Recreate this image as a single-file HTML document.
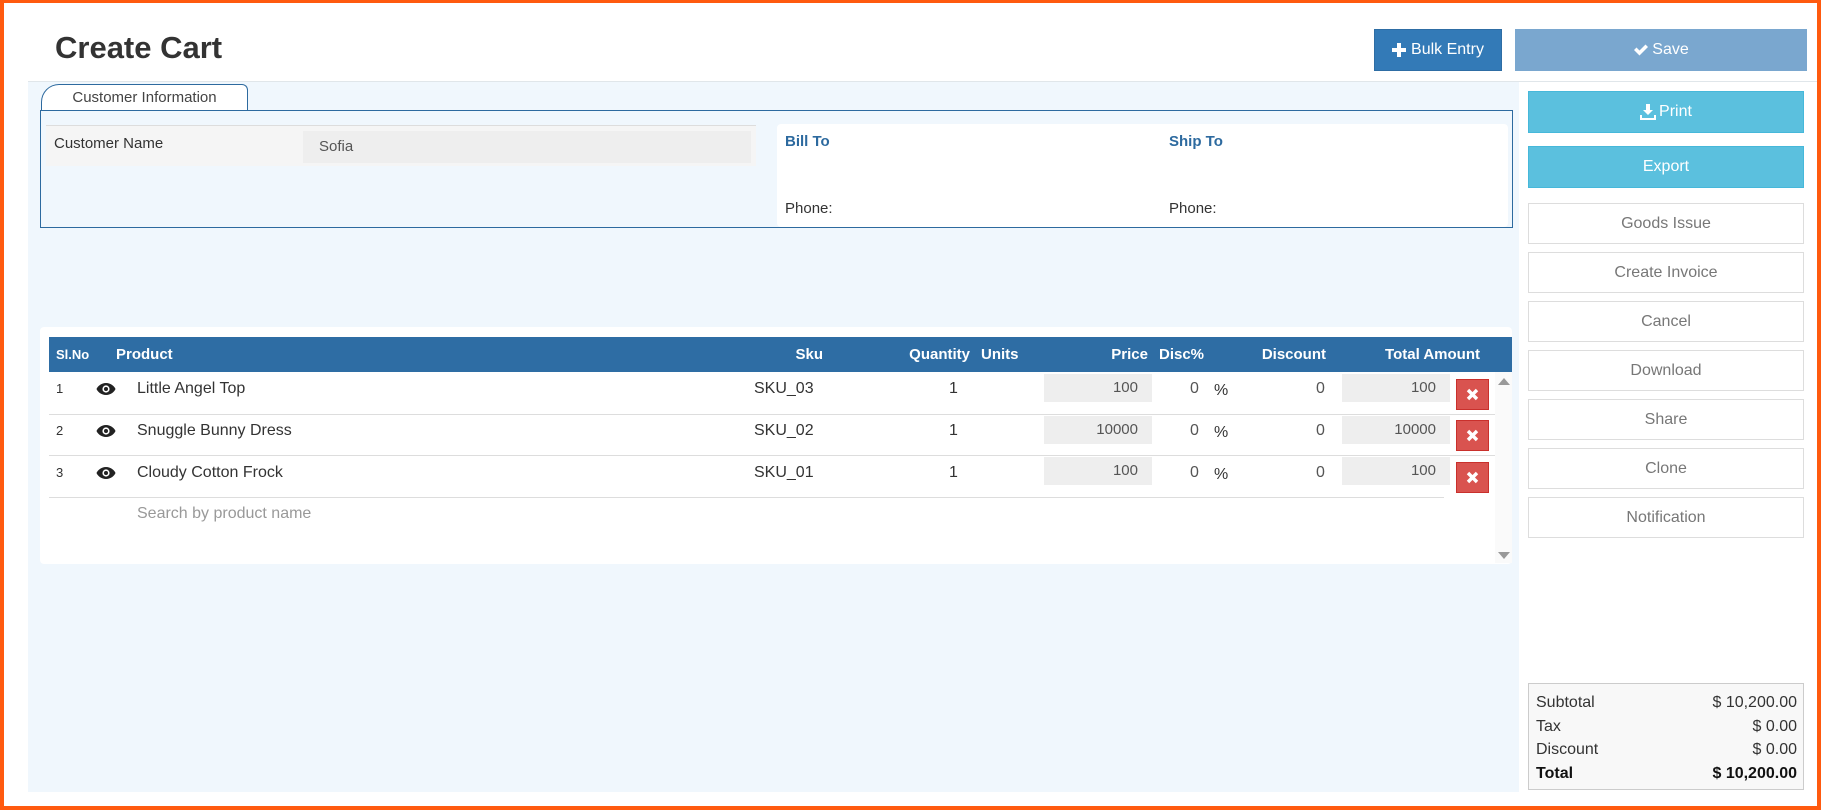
<!DOCTYPE html>
<html><head><meta charset="utf-8"><style>
*{box-sizing:border-box;margin:0;padding:0}
body{width:1821px;height:810px;position:relative;overflow:hidden;background:#fff;font-family:"Liberation Sans",sans-serif;color:#333;font-size:15px}
.a{position:absolute}
.frame{left:0;top:0;width:1821px;height:810px;border:4px solid #ff5a0f;border-top-width:3px;z-index:10;pointer-events:none}
.btn{position:absolute;display:flex;align-items:center;justify-content:center;color:#fff;font-size:16px}
.gb{position:absolute;left:1528px;width:276px;height:41px;border:1px solid #ddd;background:#fff;color:#777;font-size:16px;display:flex;align-items:center;justify-content:center}
.hd{position:absolute;top:337px;height:35px;line-height:35px;color:#fff;font-weight:bold;font-size:15px}
.r{text-align:right}
.inp{position:absolute;background:#eee;height:28px;line-height:28px;text-align:right;padding-right:14px;color:#555}
.x{position:absolute;left:1456px;width:33px;height:31px;background:#d9534f;border:1px solid #c9302c;display:flex;align-items:center;justify-content:center}
.sep{position:absolute;left:49px;width:1446px;height:1px;background:#ddd}
</style></head><body>
<div class="a frame"></div>
<div class="a" style="left:55px;top:30px;font-size:31px;font-weight:600;color:#333">Create Cart</div>
<div class="btn" style="left:1374px;top:29px;width:128px;height:42px;background:#337ab7;border:1px solid #2e6da4">
<svg width="14" height="14" viewBox="0 0 14 14" style="margin-right:5px"><path d="M5 0h4v5h5v4H9v5H5V9H0V5h5z" fill="#fff"/></svg>Bulk Entry</div>
<div class="btn" style="left:1515px;top:29px;width:292px;height:42px;background:#7aa7cf">
<svg width="16" height="14" viewBox="0 0 16 14" style="margin-right:3px"><path d="M1 7l2.5-2.5L6.5 7.5 12.5 1.5 15 4 6.5 12.5z" fill="#fff"/></svg>Save</div>
<div class="a" style="left:28px;top:81px;width:1789px;height:1px;background:#e0e6ea"></div>
<div class="a" style="left:28px;top:82px;width:1491px;height:710px;background:#f0f7fd"></div>
<div class="a" style="left:1519px;top:82px;width:298px;height:710px;background:#fff"></div>
<div class="btn" style="left:1528px;top:91px;width:276px;height:42px;background:#5bc0de;border:1px solid #46b8da">
<svg width="16" height="16" viewBox="0 0 16 16" style="margin-right:3px"><path d="M6 0h4v6h3l-5 5-5-5h3z M0 11h2v3h12v-3h2v5H0z" fill="#fff"/></svg>Print</div>
<div class="btn" style="left:1528px;top:146px;width:276px;height:42px;background:#5bc0de;border:1px solid #46b8da">Export</div>
<div class="gb" style="top:203px">Goods Issue</div>
<div class="gb" style="top:252px">Create Invoice</div>
<div class="gb" style="top:301px">Cancel</div>
<div class="gb" style="top:350px">Download</div>
<div class="gb" style="top:399px">Share</div>
<div class="gb" style="top:448px">Clone</div>
<div class="gb" style="top:497px">Notification</div>
<div class="a" style="left:1528px;top:683px;width:276px;height:107px;background:#f8f8f8;border:1px solid #ccc;font-size:16px;padding:7px 6px 0 7px;line-height:23.5px">
<div style="display:flex;justify-content:space-between"><span>Subtotal</span><span>$ 10,200.00</span></div>
<div style="display:flex;justify-content:space-between"><span>Tax</span><span>$ 0.00</span></div>
<div style="display:flex;justify-content:space-between"><span>Discount</span><span>$ 0.00</span></div>
<div style="display:flex;justify-content:space-between;font-weight:bold;color:#111"><span>Total</span><span>$ 10,200.00</span></div>
</div>
<!-- customer info -->
<div class="a" style="left:41px;top:84px;width:207px;height:27px;background:#fff;border:1px solid #2d6a9f;border-bottom:none;border-radius:18px 6px 0 0;text-align:center;line-height:26px;font-size:15px;color:#444">Customer Information</div>
<div class="a" style="left:40px;top:110px;width:1473px;height:118px;border:1px solid #2d6a9f"></div>
<div class="a" style="left:46px;top:125px;width:710px;height:41px;background:#f5f5f5;border-top:1px solid #ddd"></div>
<div class="a" style="left:54px;top:135px;font-size:15px">Customer Name</div>
<div class="a" style="left:303px;top:131px;width:448px;height:32px;background:#eee;padding-left:16px;line-height:32px;color:#555">Sofia</div>
<div class="a" style="left:777px;top:124px;width:731px;height:103px;background:#fff;border-radius:4px"></div>
<div class="a" style="left:785px;top:133px;color:#2d6a9f;font-weight:bold;font-size:15px">Bill To</div>
<div class="a" style="left:1169px;top:133px;color:#2d6a9f;font-weight:bold;font-size:15px">Ship To</div>
<div class="a" style="left:785px;top:200px">Phone:</div>
<div class="a" style="left:1169px;top:200px">Phone:</div>
<!-- table -->
<div class="a" style="left:40px;top:327px;width:1472px;height:237px;background:#fff;border-radius:4px"></div>
<div class="a" style="left:49px;top:337px;width:1463px;height:35px;background:#2e6da4"></div>
<div class="hd" style="left:56px;font-size:13px">Sl.No</div>
<div class="hd" style="left:116px">Product</div>
<div class="hd r" style="left:723px;width:100px">Sku</div>
<div class="hd r" style="left:870px;width:100px">Quantity</div>
<div class="hd" style="left:981px">Units</div>
<div class="hd r" style="left:1048px;width:100px">Price</div>
<div class="hd" style="left:1159px">Disc%</div>
<div class="hd r" style="left:1226px;width:100px">Discount</div>
<div class="hd r" style="left:1330px;width:150px">Total Amount</div>
<div class="a" style="left:1495px;top:372px;width:17px;height:191px;background:#fafafa"></div>
<svg class="a" style="left:1498px;top:377px" width="12" height="9"><path d="M0 8L6 1 12 8z" fill="#999"/></svg>
<svg class="a" style="left:1498px;top:551px" width="12" height="9"><path d="M0 1L6 8 12 1z" fill="#999"/></svg>

<!-- rows -->
<div id="rows"></div>
<div class="sep" style="top:414px"></div>
<div class="sep" style="top:455px"></div>
<div class="sep" style="top:497px;width:1395px"></div>

<div class="a" style="left:56px;top:381px;font-size:13px">1</div>
<div class="a" style="left:56px;top:423px;font-size:13px">2</div>
<div class="a" style="left:56px;top:465px;font-size:13px">3</div>
<svg class="a" style="left:96px;top:382px" width="20" height="14" viewBox="0 0 20 14"><path d="M10 1C5 1 1.5 4.5 0.5 7 1.5 9.5 5 13 10 13s8.5-3.5 9.5-6C18.5 4.5 15 1 10 1z" fill="#222"/><circle cx="10" cy="7" r="3.6" fill="#fff"/><circle cx="10" cy="7" r="2" fill="#222"/></svg>
<svg class="a" style="left:96px;top:424px" width="20" height="14" viewBox="0 0 20 14"><path d="M10 1C5 1 1.5 4.5 0.5 7 1.5 9.5 5 13 10 13s8.5-3.5 9.5-6C18.5 4.5 15 1 10 1z" fill="#222"/><circle cx="10" cy="7" r="3.6" fill="#fff"/><circle cx="10" cy="7" r="2" fill="#222"/></svg>
<svg class="a" style="left:96px;top:466px" width="20" height="14" viewBox="0 0 20 14"><path d="M10 1C5 1 1.5 4.5 0.5 7 1.5 9.5 5 13 10 13s8.5-3.5 9.5-6C18.5 4.5 15 1 10 1z" fill="#222"/><circle cx="10" cy="7" r="3.6" fill="#fff"/><circle cx="10" cy="7" r="2" fill="#222"/></svg>
<div class="a" style="left:137px;top:380px;font-size:16px">Little Angel Top</div>
<div class="a" style="left:137px;top:422px;font-size:16px">Snuggle Bunny Dress</div>
<div class="a" style="left:137px;top:464px;font-size:16px">Cloudy Cotton Frock</div>
<div class="a" style="left:754px;top:380px;font-size:16px">SKU_03</div>
<div class="a" style="left:754px;top:422px;font-size:16px">SKU_02</div>
<div class="a" style="left:754px;top:464px;font-size:16px">SKU_01</div>
<div class="a" style="left:949px;top:380px;font-size:16px">1</div>
<div class="a" style="left:949px;top:422px;font-size:16px">1</div>
<div class="a" style="left:949px;top:464px;font-size:16px">1</div>
<div class="inp" style="left:1044px;top:374px;width:108px">100</div>
<div class="inp" style="left:1044px;top:416px;width:108px">10000</div>
<div class="inp" style="left:1044px;top:457px;width:108px">100</div>
<div class="a" style="left:1190px;top:380px;font-size:16px;color:#555">0</div>
<div class="a" style="left:1190px;top:422px;font-size:16px;color:#555">0</div>
<div class="a" style="left:1190px;top:464px;font-size:16px;color:#555">0</div>
<div class="a" style="left:1214px;top:382px;font-size:16px">%</div>
<div class="a" style="left:1214px;top:424px;font-size:16px">%</div>
<div class="a" style="left:1214px;top:466px;font-size:16px">%</div>
<div class="a" style="left:1316px;top:380px;font-size:16px;color:#555">0</div>
<div class="a" style="left:1316px;top:422px;font-size:16px;color:#555">0</div>
<div class="a" style="left:1316px;top:464px;font-size:16px;color:#555">0</div>
<div class="inp" style="left:1342px;top:374px;width:108px">100</div>
<div class="inp" style="left:1342px;top:416px;width:108px">10000</div>
<div class="inp" style="left:1342px;top:457px;width:108px">100</div>
<div class="x" style="top:379px"><svg width="13" height="13" viewBox="0 0 13 13"><path d="M2 2L11 11M11 2L2 11" stroke="#fff" stroke-width="3.4"/></svg></div>
<div class="x" style="top:420px"><svg width="13" height="13" viewBox="0 0 13 13"><path d="M2 2L11 11M11 2L2 11" stroke="#fff" stroke-width="3.4"/></svg></div>
<div class="x" style="top:462px"><svg width="13" height="13" viewBox="0 0 13 13"><path d="M2 2L11 11M11 2L2 11" stroke="#fff" stroke-width="3.4"/></svg></div>
<div class="a" style="left:137px;top:505px;font-size:16px;color:#999">Search by product name</div>
</body></html>
